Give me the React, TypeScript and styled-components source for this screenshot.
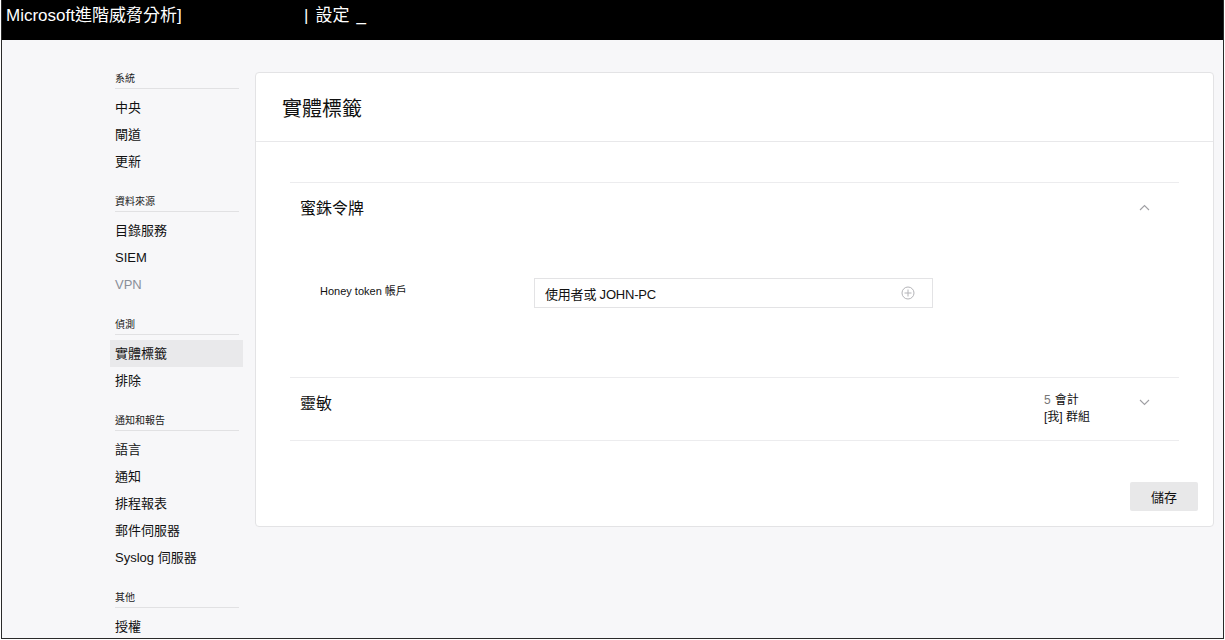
import React from "react";
import styled, { createGlobalStyle } from "styled-components";

const Global = createGlobalStyle`
  html, body { margin: 0; padding: 0; background: #ffffff; }
  * { box-sizing: border-box; }
  body { font-family: "Liberation Sans", "Noto Sans CJK TC", sans-serif; color: #111; }
`;

const Frame = styled.div`
  margin: 0 1px;
  height: 639px;
  border: 1px solid #2a2a2a;
  border-top: none;
  background: #f7f7f9;
  display: flex;
  flex-direction: column;
  overflow: hidden;
`;

const TopBar = styled.header`
  height: 40px;
  background: #000;
  color: #fff;
  display: flex;
  align-items: flex-start;
  padding: 5px 0 0 4px;
  font-size: 17px;
  line-height: 22px;
  flex-shrink: 0;
`;

const Brand = styled.span`
  width: 298px;
  white-space: nowrap;
`;

const Crumb = styled.span`
  display: flex;
  align-items: flex-start;
  gap: 7px;
  white-space: nowrap;
`;

const Body = styled.div`
  flex: 1;
  display: flex;
  align-items: flex-start;
  padding: 32px 9px 0 108px;
  gap: 12px;
`;

const Sidebar = styled.nav`
  width: 133px;
  flex-shrink: 0;
  display: flex;
  flex-direction: column;
  gap: 20px;
`;

const Group = styled.div`
  display: flex;
  flex-direction: column;
`;

const GroupTitle = styled.div`
  margin: 0 4px 5px 5px;
  font-size: 10px;
  line-height: 14px;
  padding-bottom: 2px;
  border-bottom: 1px solid #e1e1e3;
  color: #222;
`;

const Item = styled.div<{ $active?: boolean; $muted?: boolean }>`
  height: 27px;
  line-height: 27px;
  padding-left: 5px;
  font-size: 13px;
  color: ${(p) => (p.$muted ? "#8a8f99" : "#111")};
  background: ${(p) => (p.$active ? "#e9e9eb" : "transparent")};
`;

const Card = styled.section`
  flex: 1;
  background: #fff;
  border: 1px solid #e3e3e5;
  border-radius: 4px;
`;

const CardHeader = styled.div`
  height: 69px;
  display: flex;
  align-items: center;
  padding-left: 26px;
  font-size: 20px;
  border-bottom: 1px solid #e8e8ea;
`;

const CardBody = styled.div`
  padding: 40px 34px 0 34px;
`;

const Section = styled.div<{ $last?: boolean }>`
  border-top: 1px solid #ececee;
  border-bottom: ${(p) => (p.$last ? "1px solid #ececee" : "none")};
`;

const SectionHead = styled.div<{ $h: number; $pt: number }>`
  height: ${(p) => p.$h}px;
  display: flex;
  align-items: flex-start;
  padding: ${(p) => p.$pt}px 29px 0 10px;
`;

const SectionTitle = styled.div<{ $mt: number }>`
  font-size: 16px;
  line-height: 20px;
  margin-top: ${(p) => p.$mt}px;
  flex: 1;
`;

const Meta = styled.div`
  width: 95px;
  font-size: 12px;
  line-height: 17px;
  color: #111;
`;

const Num = styled.span`
  color: #777;
  margin-right: 4px;
`;

const Chevron = styled.svg<{ $mt: number }>`
  width: 11px;
  height: 7px;
  margin-top: ${(p) => p.$mt}px;
  flex-shrink: 0;
`;

const FieldRow = styled.div`
  display: flex;
  align-items: flex-start;
  padding: 43px 0 69px 30px;
`;

const FieldLabel = styled.div`
  width: 214px;
  font-size: 11px;
  line-height: 14px;
  padding-top: 6px;
  color: #111;
`;

const InputBox = styled.div`
  width: 399px;
  height: 30px;
  border: 1px solid #e3e3e5;
  display: flex;
  align-items: center;
  padding: 0 17px 0 10px;
  font-size: 13px;
  color: #111;
`;

const InputText = styled.span`
  flex: 1;
  letter-spacing: -0.2px;
`;

const Footer = styled.div`
  display: flex;
  justify-content: flex-end;
  padding: 41px 15px 15px 0;
`;

const SaveButton = styled.button`
  width: 68px;
  height: 29px;
  border: none;
  border-radius: 2px;
  background: #e8e8e9;
  font-family: "Liberation Sans", "Noto Sans CJK TC", sans-serif;
  font-size: 13px;
  color: #111;
  padding: 0;
`;

const groups: { title: string; items: { label: string; active?: boolean; muted?: boolean }[] }[] = [
  { title: "系統", items: [{ label: "中央" }, { label: "閘道" }, { label: "更新" }] },
  { title: "資料來源", items: [{ label: "目錄服務" }, { label: "SIEM" }, { label: "VPN", muted: true }] },
  { title: "偵測", items: [{ label: "實體標籤", active: true }, { label: "排除" }] },
  {
    title: "通知和報告",
    items: [{ label: "語言" }, { label: "通知" }, { label: "排程報表" }, { label: "郵件伺服器" }, { label: "Syslog 伺服器" }],
  },
  { title: "其他", items: [{ label: "授權" }] },
];

const ChevronIcon = ({ up, mt }: { up?: boolean; mt: number }) => (
  <Chevron $mt={mt} viewBox="0 0 11 7">
    <polyline
      points={up ? "1,6 5.5,1.5 10,6" : "1,1 5.5,5.5 10,1"}
      fill="none"
      stroke="#a0a0a4"
      strokeWidth="1.1"
    />
  </Chevron>
);

export default function App() {
  return (
    <>
      <Global />
      <Frame>
        <TopBar>
          <Brand>Microsoft進階威脅分析]</Brand>
          <Crumb>
            <span>|</span>
            <span>設定</span>
            <span>_</span>
          </Crumb>
        </TopBar>
        <Body>
          <Sidebar>
            {groups.map((g) => (
              <Group key={g.title}>
                <GroupTitle>{g.title}</GroupTitle>
                {g.items.map((it) => (
                  <Item key={it.label} $active={it.active} $muted={it.muted}>
                    {it.label}
                  </Item>
                ))}
              </Group>
            ))}
          </Sidebar>
          <Card>
            <CardHeader>實體標籤</CardHeader>
            <CardBody>
              <Section>
                <SectionHead $h={52} $pt={16}>
                  <SectionTitle $mt={0}>蜜銖令牌</SectionTitle>
                  <ChevronIcon up mt={5} />
                </SectionHead>
                <FieldRow>
                  <FieldLabel>Honey token 帳戶</FieldLabel>
                  <InputBox>
                    <InputText>使用者或 JOHN-PC</InputText>
                    <svg width="14" height="14" viewBox="0 0 14 14">
                      <circle cx="7" cy="7" r="6" fill="none" stroke="#b4b4b8" strokeWidth="1" />
                      <line x1="7" y1="3.5" x2="7" y2="10.5" stroke="#b4b4b8" strokeWidth="1" />
                      <line x1="3.5" y1="7" x2="10.5" y2="7" stroke="#b4b4b8" strokeWidth="1" />
                    </svg>
                  </InputBox>
                </FieldRow>
              </Section>
              <Section $last>
                <SectionHead $h={62} $pt={14}>
                  <SectionTitle $mt={2}>靈敏</SectionTitle>
                  <Meta>
                    <div>
                      <Num>5</Num>會計
                    </div>
                    <div>[我] 群組</div>
                  </Meta>
                  <ChevronIcon mt={7} />
                </SectionHead>
              </Section>
            </CardBody>
            <Footer>
              <SaveButton>儲存</SaveButton>
            </Footer>
          </Card>
        </Body>
      </Frame>
    </>
  );
}
